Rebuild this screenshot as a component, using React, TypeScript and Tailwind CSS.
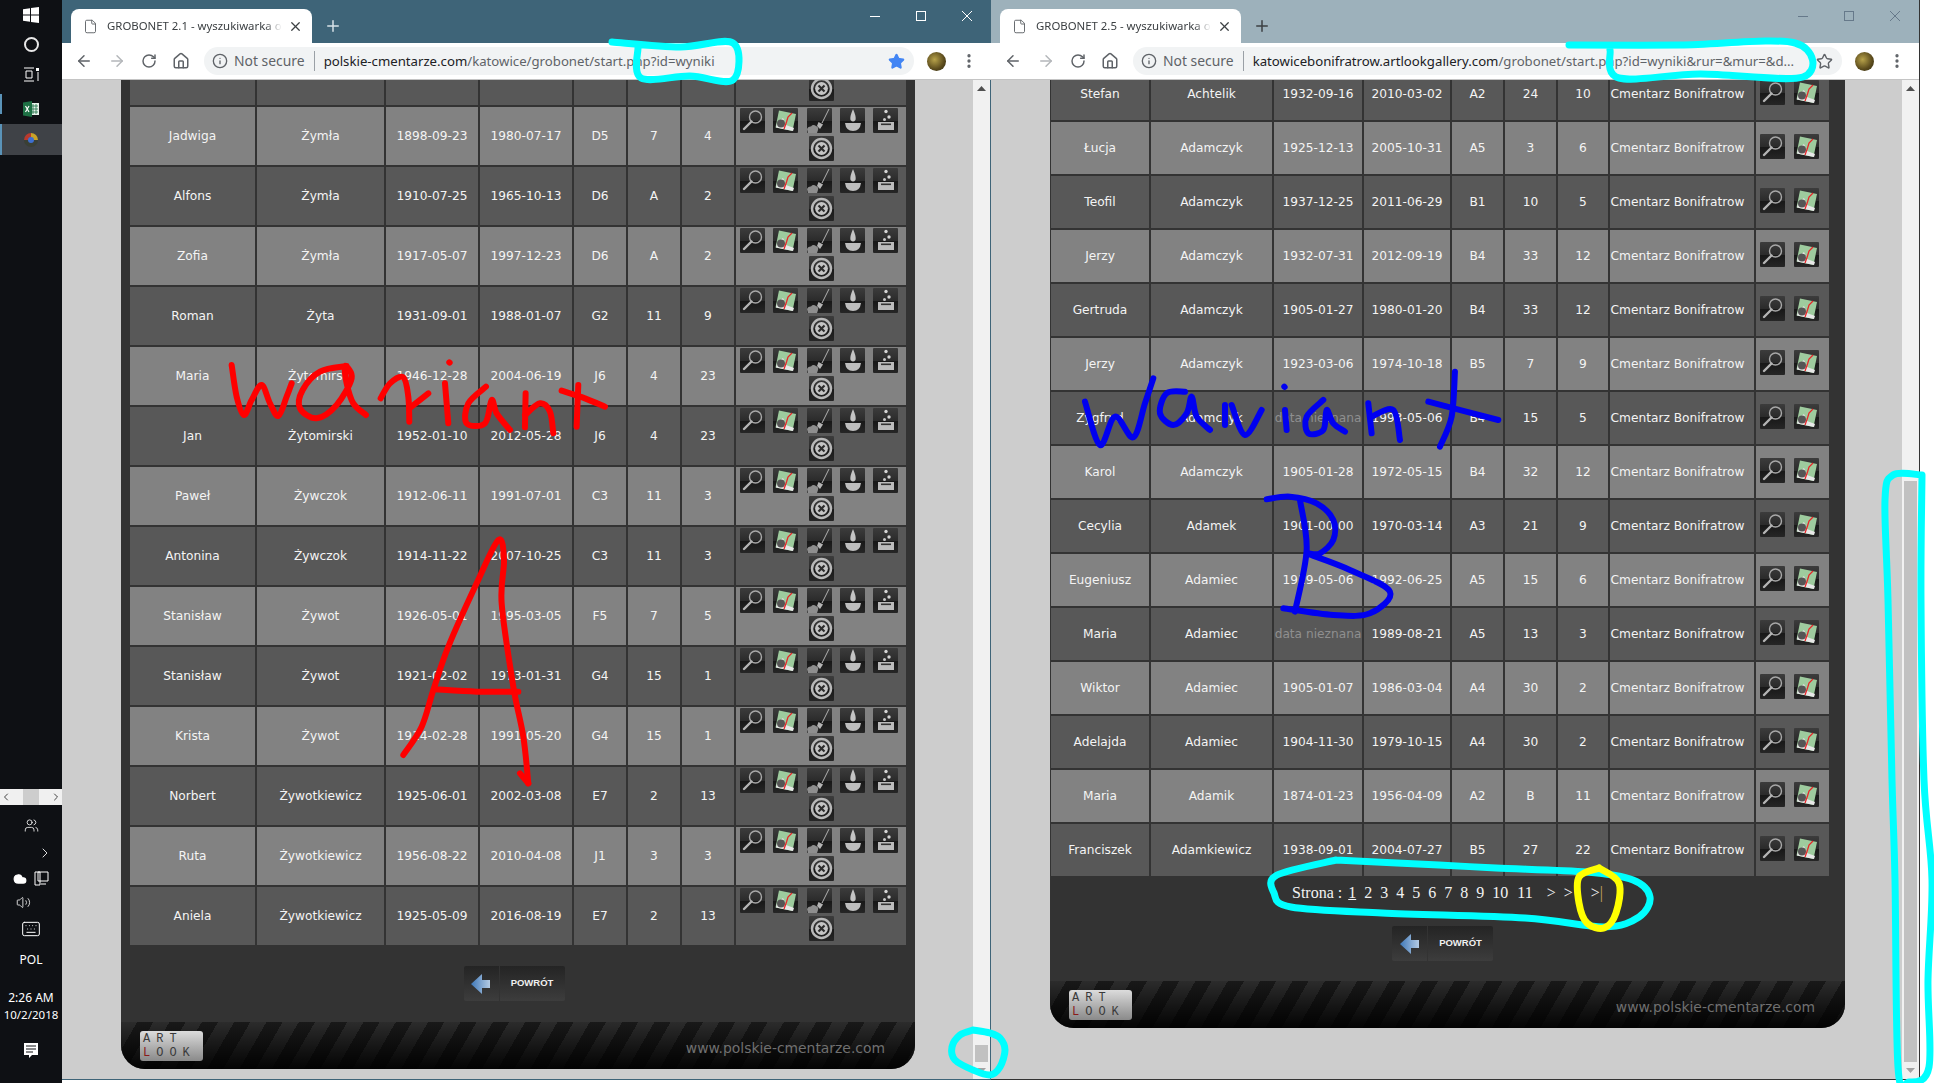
import { ArrowLeft, ArrowRight, ChevronLeft, ChevronRight, Cloud, File, Home, Info, Keyboard, MoreVertical, Plus, RotateCw, Star, Users, Volume2, X } from "lucide-react";

type Row = string[];

const LEFT_ROWS: Row[] = [
  ["Jadwiga", "Żymła", "1898-09-23", "1980-07-17", "D5", "7", "4"],
  ["Alfons", "Żymła", "1910-07-25", "1965-10-13", "D6", "A", "2"],
  ["Zofia", "Żymła", "1917-05-07", "1997-12-23", "D6", "A", "2"],
  ["Roman", "Żyta", "1931-09-01", "1988-01-07", "G2", "11", "9"],
  ["Maria", "Żytomirski", "1946-12-28", "2004-06-19", "J6", "4", "23"],
  ["Jan", "Żytomirski", "1952-01-10", "2012-05-28", "J6", "4", "23"],
  ["Paweł", "Żywczok", "1912-06-11", "1991-07-01", "C3", "11", "3"],
  ["Antonina", "Żywczok", "1914-11-22", "2007-10-25", "C3", "11", "3"],
  ["Stanisław", "Żywot", "1926-05-01", "1995-03-05", "F5", "7", "5"],
  ["Stanisław", "Żywot", "1921-02-02", "1973-01-31", "G4", "15", "1"],
  ["Krista", "Żywot", "1914-02-28", "1991-05-20", "G4", "15", "1"],
  ["Norbert", "Żywotkiewicz", "1925-06-01", "2002-03-08", "E7", "2", "13"],
  ["Ruta", "Żywotkiewicz", "1956-08-22", "2010-04-08", "J1", "3", "3"],
  ["Aniela", "Żywotkiewicz", "1925-05-09", "2016-08-19", "E7", "2", "13"],
];

const RIGHT_ROWS: Row[] = [
  ["Stefan", "Achtelik", "1932-09-16", "2010-03-02", "A2", "24", "10"],
  ["Łucja", "Adamczyk", "1925-12-13", "2005-10-31", "A5", "3", "6"],
  ["Teofil", "Adamczyk", "1937-12-25", "2011-06-29", "B1", "10", "5"],
  ["Jerzy", "Adamczyk", "1932-07-31", "2012-09-19", "B4", "33", "12"],
  ["Gertruda", "Adamczyk", "1905-01-27", "1980-01-20", "B4", "33", "12"],
  ["Jerzy", "Adamczyk", "1923-03-06", "1974-10-18", "B5", "7", "9"],
  ["Zygfryd", "Adamczyk", "data nieznana", "1993-05-06", "B4", "15", "5"],
  ["Karol", "Adamczyk", "1905-01-28", "1972-05-15", "B4", "32", "12"],
  ["Cecylia", "Adamek", "1901-00-00", "1970-03-14", "A3", "21", "9"],
  ["Eugeniusz", "Adamiec", "1919-05-06", "1992-06-25", "A5", "15", "6"],
  ["Maria", "Adamiec", "data nieznana", "1989-08-21", "A5", "13", "3"],
  ["Wiktor", "Adamiec", "1905-01-07", "1986-03-04", "A4", "30", "2"],
  ["Adelajda", "Adamiec", "1904-11-30", "1979-10-15", "A4", "30", "2"],
  ["Maria", "Adamik", "1874-01-23", "1956-04-09", "A2", "B", "11"],
  ["Franciszek", "Adamkiewicz", "1938-09-01", "2004-07-27", "B5", "27", "22"],
];

const PAGES = ["2", "3", "4", "5", "6", "7", "8", "9", "10", "11"];

function IconBox({ children }: { children: React.ReactNode }) {
  return (
    <svg width="25" height="25" viewBox="0 0 25 25" className="shrink-0">
      <defs>
        <linearGradient id="btn" x1="0" y1="0" x2="0" y2="1">
          <stop offset="0" stopColor="#3c3c3c" />
          <stop offset="0.5" stopColor="#2b2b2b" />
          <stop offset="0.52" stopColor="#171717" />
          <stop offset="1" stopColor="#262626" />
        </linearGradient>
      </defs>
      <rect width="25" height="25" rx="1" fill="url(#btn)" />
      {children}
    </svg>
  );
}

const SearchIcon = () => (
  <IconBox>
    <circle cx="15.5" cy="9" r="6" fill="none" stroke="#a8a8a8" strokeWidth="1.4" />
    <path d="M11.5 13.5 L4 21" stroke="#b4b4b4" strokeWidth="2.4" strokeLinecap="round" />
  </IconBox>
);

const MapIcon = () => (
  <IconBox>
    <path d="M6 2.5 L23 6 L19.5 23 L2.5 19.5 Z" fill="#9ecb9e" />
    <path d="M4 15 L10 10 L13 17 L21 20 L20 23 L3 19.5 Z" fill="#e8e8e8" />
    <circle cx="8" cy="15.5" r="4" fill="#555" />
    <path d="M19 5 L15 9 L13.5 14 L11 21" fill="none" stroke="#e8262a" strokeWidth="1.3" />
  </IconBox>
);

const BroomIcon = () => (
  <IconBox>
    <path d="M22 1 L15 15" stroke="#b0b0b0" strokeWidth="1" />
    <path d="M11.5 14 L16 16.5 L13 21 L10 18 Z" fill="#b4b4b4" />
    <path d="M0 21 Q1 18 4 18.5 Q6 16 9 18 Q12 19 11 22 L10 25 L1 25 Z" fill="#8e8e8e" />
  </IconBox>
);

const CandleIcon = () => (
  <IconBox>
    <path d="M13 1 Q16.5 9 15.5 12 Q13 15 10.5 12 Q9.5 9 13 1 Z" fill="#c4c4c4" />
    <path d="M5 15 H21 Q20 23 13 23 Q6 23 5 15 Z" fill="#bdbdbd" />
  </IconBox>
);

const UrnIcon = () => (
  <IconBox>
    <circle cx="13" cy="3.5" r="1.7" fill="#d4d4d4" />
    <circle cx="16" cy="9" r="1.7" fill="#d4d4d4" />
    <circle cx="11.5" cy="11.5" r="1.5" fill="#c8c8c8" />
    <path d="M5 14 H21 V22 H5 Z" fill="#bcbcbc" />
    <rect x="8" y="15.5" width="10" height="1.6" fill="#333" />
  </IconBox>
);

const RemoveIcon = () => (
  <IconBox>
    <circle cx="12.5" cy="12.5" r="9.5" fill="none" stroke="#b8b8b8" strokeWidth="2.4" />
    <circle cx="12.5" cy="12.5" r="6.4" fill="#c4c4c4" />
    <path d="M9.5 9.5 L15.5 15.5 M15.5 9.5 L9.5 15.5" stroke="#2d2d2d" strokeWidth="2.2" />
  </IconBox>
);

function Cell({ value, light, extra = "" }: { value: string; light: boolean; extra?: string }) {
  const dim = value === "data nieznana";
  return (
    <div
      className={`flex items-center justify-center overflow-hidden whitespace-nowrap font-['DejaVu_Sans',sans-serif] text-[12.2px] ${
        light ? "bg-[#828282]" : "bg-[#585858]"
      } ${dim ? "text-[#8f8f8f]" : "text-[#f4f4f4]"} ${extra}`}
    >
      {value}
    </div>
  );
}

function Footer() {
  return (
    <div className="flex h-[47px] items-center justify-between rounded-b-[24px] pr-[30px] pl-[19px] [background:linear-gradient(180deg,rgba(0,0,0,0.05)_0%,rgba(0,0,0,0.55)_55%,rgba(0,0,0,0.92)_100%),repeating-linear-gradient(120deg,#2e2e2e_0px,#2e2e2e_14px,#1a1a1a_14px,#1a1a1a_28px)]">
      <div className="flex h-[30px] w-[63px] flex-col justify-center rounded-[3px] bg-gradient-to-b from-[#dcdcdc] to-[#8a8a8a] pl-[3px] font-['Liberation_Mono',monospace] text-[12px] leading-[14px] text-[#3a3a3a]">
        <span className="tracking-[6px]">ART</span>
        <span className="tracking-[6px]">
          <span className="text-[#8b1a1a]">L</span>OOK
        </span>
      </div>
      <span className="pt-[5px] font-['DejaVu_Sans',sans-serif] text-[13.9px] text-[#707070]">www.polskie-cmentarze.com</span>
    </div>
  );
}

function BackButton({ extra }: { extra: string }) {
  return (
    <div className={`flex h-[35px] justify-center ${extra}`}>
      <div className="flex h-full w-[35px] items-center justify-center rounded-l-[2px] bg-gradient-to-b from-[#242424] to-[#3d3d3d]">
        <svg width="20" height="20" viewBox="0 0 20 20">
          <defs>
            <linearGradient id="arrow" x1="0" y1="0" x2="1" y2="0">
              <stop offset="0" stopColor="#3f78b8" />
              <stop offset="1" stopColor="#b4cbe4" />
            </linearGradient>
          </defs>
          <path d="M0 10 L11 0 V6 H19 V14 H11 V20 Z" fill="url(#arrow)" />
        </svg>
      </div>
      <div className="ml-[1px] flex h-full w-[65px] items-center justify-center rounded-r-[2px] bg-gradient-to-b from-[#242424] to-[#3d3d3d] font-['Liberation_Sans',sans-serif] text-[9.5px] font-bold text-[#f0f0f0]">
        POWRÓT
      </div>
    </div>
  );
}

function Toolbar({ host, path, starred }: { host: string; path: string; starred: boolean }) {
  return (
    <div className="flex h-[37px] items-center border-b border-[#c4c4c4] bg-white pl-[13px]">
      <div className="flex w-[129px] items-center gap-[15px] text-[#5f6368]">
        <ArrowLeft size={18} strokeWidth={2} />
        <ArrowRight size={18} strokeWidth={2} className="text-[#b4b7ba]" />
        <RotateCw size={16} strokeWidth={2.2} />
        <Home size={18} strokeWidth={2} />
      </div>
      <div className="flex h-[28px] flex-1 items-center rounded-full bg-[#f1f3f4] pr-[9px] pl-[8px] font-['Noto_Sans',sans-serif] text-[13.2px]">
        <Info size={16} strokeWidth={2} className="mr-[6px] shrink-0 text-[#5f6368]" />
        <span className="pt-px text-[13.9px] text-[#5f6368]">Not secure</span>
        <span className="mx-[9px] h-[20px] w-px bg-[#9aa0a6]" />
        <span className="flex-1 whitespace-nowrap pt-px">
          <span className="text-[#202124]">{host}</span>
          <span className="text-[#5f6368]">{path}</span>
        </span>
        {starred ? (
          <Star size={17} className="shrink-0 fill-[#4285f4] text-[#4285f4]" />
        ) : (
          <Star size={17} strokeWidth={2} className="shrink-0 text-[#5f6368]" />
        )}
      </div>
      <div className="flex w-[77px] items-center pl-[13px]">
        <span className="h-[19px] w-[19px] rounded-full bg-[radial-gradient(circle_at_40%_40%,#b7a24a,#5a4a1c_60%,#2c2a14)]" />
        <MoreVertical size={18} strokeWidth={2.4} className="ml-[14px] text-[#5f6368]" />
      </div>
    </div>
  );
}

function TitleBar({ title, active }: { title: string; active: boolean }) {
  return (
    <div className={`flex h-[43px] items-end pl-[9px] ${active ? "bg-[#3e6478]" : "bg-[#9db1bb]"}`}>
      <div className="flex h-[34px] w-[241px] items-center rounded-t-[8px] bg-white pr-[9px] pl-[12px]">
        <File size={15} strokeWidth={1.5} className="shrink-0 text-[#5f6368]" />
        <span className="ml-[9px] flex-1 whitespace-nowrap font-['Noto_Sans',sans-serif] text-[11.4px] text-[#3c4043] [mask-image:linear-gradient(90deg,#000_90%,transparent)]">
          {title}
        </span>
        <X size={15} strokeWidth={2} className="ml-[6px] shrink-0 text-[#3c4043]" />
      </div>
      <div className={`flex h-[34px] w-[42px] items-center justify-center ${active ? "text-[#d8e2e8]" : "text-[#3c4043]"}`}>
        <Plus size={18} strokeWidth={2} />
      </div>
      <div className={`ml-auto flex h-full items-start gap-[36px] pt-[7px] pr-[19px] ${active ? "text-white" : "text-[#66798a]"}`}>
        <svg width="10" height="18" viewBox="0 0 10 18"><path d="M0 9.5 H10" stroke="currentColor" strokeWidth="1" /></svg>
        <svg width="10" height="18" viewBox="0 0 10 18"><rect x="0.5" y="4.5" width="9" height="9" fill="none" stroke="currentColor" strokeWidth="1" /></svg>
        <svg width="10" height="18" viewBox="0 0 10 18"><path d="M0 4 L10 14 M10 4 L0 14" stroke="currentColor" strokeWidth="1" /></svg>
      </div>
    </div>
  );
}

function Scrollbar({ thumbTop, thumbHeight }: { thumbTop: string; thumbHeight: string }) {
  return (
    <div className="flex w-[17px] shrink-0 flex-col items-center bg-[#f1f1f1]">
      <div className="flex h-[17px] w-full items-center justify-center text-[#505050]">
        <svg width="9" height="5" viewBox="0 0 9 5"><path d="M4.5 0 L9 5 H0 Z" fill="currentColor" /></svg>
      </div>
      <div className={`w-[13px] bg-[#c1c1c1] ${thumbTop} ${thumbHeight}`} />
      <div className="mt-auto flex h-[17px] w-full items-center justify-center text-[#a3a3a3]">
        <svg width="9" height="5" viewBox="0 0 9 5"><path d="M4.5 5 L9 0 H0 Z" fill="currentColor" /></svg>
      </div>
    </div>
  );
}

function LeftWindow() {
  const cols = "grid grid-cols-[125px_127px_92px_92px_52px_52px_52px_170px] gap-[2px]";
  return (
    <div className="flex h-[1080px] w-[929px] shrink-0 flex-col border-b border-[#3e6478]">
      <TitleBar title="GROBONET 2.1 - wyszukiwarka o" active />
      <Toolbar host="polskie-cmentarze.com" path="/katowice/grobonet/start.php?id=wyniki" starred />
      <div className="flex min-h-0 flex-1 overflow-hidden border-r border-[#3e6478] bg-[#cdcdcd]">
        <div className="min-w-0 flex-1 overflow-hidden">
          <div className="mt-[-33px] ml-[59px] flex h-[1022px] w-[794px] flex-col rounded-b-[24px] bg-[#333] pr-[9px] pl-[9px]">
            <div className={cols}>
              <Cell value="" light={false} />
              <Cell value="" light={false} />
              <Cell value="" light={false} />
              <Cell value="" light={false} />
              <Cell value="" light={false} />
              <Cell value="" light={false} />
              <Cell value="" light={false} />
              <IconsFull light={false} />
              {LEFT_ROWS.map((row, i) => (
                <RowCells key={i} row={row} light={i % 2 === 0} full />
              ))}
            </div>
            <div className="mt-[21px]">
              <BackButton extra="pr-[8px]" />
            </div>
            <div className="mt-auto -mr-[9px] -ml-[9px]">
              <Footer />
            </div>
          </div>
        </div>
        <Scrollbar thumbTop="mt-[948px]" thumbHeight="h-[17px]" />
      </div>
    </div>
  );
}

function IconsFull({ light }: { light: boolean }) {
  return (
    <div className={`flex h-[58px] flex-wrap content-start justify-center gap-x-[8.25px] gap-y-[3px] pt-[1px] pr-[4px] ${light ? "bg-[#828282]" : "bg-[#585858]"}`}>
      <SearchIcon />
      <MapIcon />
      <BroomIcon />
      <CandleIcon />
      <UrnIcon />
      <span className="ml-[4px] flex">
        <RemoveIcon />
      </span>
    </div>
  );
}

function RowCells({ row, light, full }: { row: Row; light: boolean; full?: boolean }) {
  return (
    <>
      {row.map((value, i) => (
        <Cell key={i} value={value} light={light} />
      ))}
      {full ? (
        <IconsFull light={light} />
      ) : (
        <>
          <Cell value="Cmentarz Bonifratrow" light={light} extra="pr-[9px]" />
          <div className={`flex h-[52px] items-start justify-center gap-[9px] pt-[12px] pr-[6px] ${light ? "bg-[#828282]" : "bg-[#585858]"}`}>
            <SearchIcon />
            <MapIcon />
          </div>
        </>
      )}
    </>
  );
}

function RightWindow() {
  return (
    <div className="flex h-[1080px] w-[929px] shrink-0 flex-col border-r border-b border-[#333]">
      <TitleBar title="GROBONET 2.5 - wyszukiwarka o" active={false} />
      <Toolbar host="katowicebonifratrow.artlookgallery.com" path="/grobonet/start.php?id=wyniki&rur=&mur=&d..." starred={false} />
      <div className="flex min-h-0 flex-1 overflow-hidden bg-[#cdcdcd]">
        <div className="min-w-0 flex-1 overflow-hidden">
          <div className="mt-[-12px] ml-[59px] flex h-[960px] w-[795px] flex-col rounded-b-[24px] bg-[#333] pr-[16px] pl-[1px]">
            <div className="grid grid-cols-[98px_121px_88px_86px_51px_51px_50px_144px_73px] gap-[2px]">
              {RIGHT_ROWS.map((row, i) => (
                <RowCells key={i} row={row} light={i % 2 === 1} />
              ))}
            </div>
            <div className="mt-[5px] flex h-[24px] items-center pl-[241px] font-['Liberation_Serif',serif] text-[16px] text-[#f2f2f2]">
              <span className="mr-[6px]">Strona :</span>
              <div className="flex gap-[8px]">
                <span className="underline">1</span>
                {PAGES.map((p) => (
                  <span key={p} className={p === "11" ? "ml-[1px]" : ""}>{p}</span>
                ))}
              </div>
              <span className="ml-[14px]">&gt;</span>
              <span className="ml-[8px]">&gt;</span>
              <span className="ml-[18px]">&gt;<span className="text-[#c9a860]">|</span></span>
            </div>
            <div className="mt-[21px]">
              <BackButton extra="pl-[5px]" />
            </div>
            <div className="mt-auto -mr-[16px] -ml-[1px]">
              <Footer />
            </div>
          </div>
        </div>
        <Scrollbar thumbTop="mt-[384px]" thumbHeight="h-[582px]" />
      </div>
    </div>
  );
}

function Taskbar() {
  return (
    <div className="flex h-[1083px] w-[62px] shrink-0 flex-col items-center bg-[#0e1014] text-white">
      <svg width="16" height="16" viewBox="0 0 16 16" className="mt-[7px]">
        <path d="M0 2.2 L7 1.2 V7.5 H0 Z M8 1 L16 0 V7.5 H8 Z M0 8.5 H7 V14.8 L0 13.8 Z M8 8.5 H16 V16 L8 15 Z" fill="#fff" />
      </svg>
      <span className="mt-[14px] h-[15px] w-[15px] rounded-full border-[2px] border-[#e8e8e8]" />
      <svg width="17" height="15" viewBox="0 0 17 15" className="mt-[15px]">
        <path d="M1 1 H11 M1 14 H11 M3 4 H9 V11 H3 Z M15 5 V14" stroke="#fff" strokeWidth="1" fill="none" />
        <rect x="13" y="1" width="3" height="3" fill="#fff" />
      </svg>
      <div className="relative mt-[11px] flex h-[31px] w-full items-center justify-center">
        <span className="absolute top-[1px] left-0 h-[20px] w-[2px] bg-[#5a93b8]" />
        <svg width="16" height="16" viewBox="0 0 16 16">
          <rect x="6" y="2" width="10" height="12" fill="#e6f2ea" />
          <path d="M10 3 V13 M13 3 V13 M7 5 H15 M7 8 H15 M7 11 H15" stroke="#1d7044" strokeWidth="0.8" />
          <path d="M0 1.5 L9 0 V16 L0 14.5 Z" fill="#1d7044" />
          <path d="M2.5 5 L6 11 M6 5 L2.5 11" stroke="#fff" strokeWidth="1.2" />
        </svg>
      </div>
      <div className="relative flex h-[31px] w-full items-center justify-center bg-[#3f4247]">
        <span className="absolute top-0 left-0 h-full w-[2px] bg-[#5a93b8]" />
        <svg width="14" height="14" viewBox="0 0 14 14">
          <path d="M7 0 A7 7 0 0 1 14 7 H7 Z" fill="#c9a227" />
          <path d="M7 0 A7 7 0 0 0 0 7 H7 Z" fill="#b83a2e" />
          <path d="M0 7 A7 7 0 0 0 14 7 H7 Z" fill="#3a3f35" />
          <circle cx="7" cy="7" r="3" fill="#3d6fd0" />
        </svg>
      </div>
      <div className="mt-[634px] flex h-[16px] w-full items-center justify-between bg-[#f0f0f0] text-[#444]">
        <ChevronLeft size={12} />
        <span className="h-full w-[16px] bg-[#cdcdcd]" />
        <ChevronRight size={12} />
      </div>
      <Users size={15} className="mt-[13px]" strokeWidth={1.3} />
      <ChevronRight size={16} className="mt-[12px] ml-[27px]" strokeWidth={1.3} />
      <div className="mt-[10px] flex items-center gap-[7px]">
        <Cloud size={14} className="fill-white" />
        <svg width="15" height="15" viewBox="0 0 15 15">
          <path d="M4 1 H14 V10 H4 Z M1 1 H6 V14 H1 Z M7 13 H12" stroke="#fff" fill="none" />
        </svg>
      </div>
      <Volume2 size={15} className="mt-[9px] mr-[15px]" strokeWidth={1.3} />
      <Keyboard size={20} className="mt-[9px]" strokeWidth={1.2} />
      <span className="mt-[12px] font-['Noto_Sans',sans-serif] text-[12px]">POL</span>
      <span className="mt-[20px] font-['Noto_Sans',sans-serif] text-[12px] leading-[18px]">2:26 AM</span>
      <span className="font-['Noto_Sans',sans-serif] text-[11.5px] leading-[16px] whitespace-nowrap">10/2/2018</span>
      <svg width="16" height="16" viewBox="0 0 16 16" className="mt-[20px]">
        <path d="M1 0 H15 V12 H9 L6 15 V12 H1 Z" fill="#fff" />
        <path d="M3 3 H13 M3 6 H13 M3 9 H10" stroke="#0e1014" />
      </svg>
    </div>
  );
}

// catmull-rom through the traced points, so the pen strokes stay soft
function spline(pts: number[][]) {
  let d = `M${pts[0][0]} ${pts[0][1]}`;
  for (let i = 0; i < pts.length - 1; i++) {
    const p0 = pts[i - 1] ?? pts[i];
    const p1 = pts[i];
    const p2 = pts[i + 1];
    const p3 = pts[i + 2] ?? p2;
    d += ` C${p1[0] + (p2[0] - p0[0]) / 6} ${p1[1] + (p2[1] - p0[1]) / 6} ${p2[0] - (p3[0] - p1[0]) / 6} ${p2[1] - (p3[1] - p1[1]) / 6} ${p2[0]} ${p2[1]}`;
  }
  return d;
}

function Strokes({ lines, color, width }: { lines: number[][][]; color: string; width: number }) {
  return (
    <g fill="none" stroke={color} strokeWidth={width} strokeLinecap="round" strokeLinejoin="round">
      {lines.map((l, i) => (
        <path key={i} d={spline(l)} />
      ))}
    </g>
  );
}

const RED_WORD = [
  [[335, 75], [350, 170], [372, 225], [395, 180], [425, 135], [450, 190], [475, 228], [500, 170], [515, 130]],
  [[680, 78], [600, 95], [548, 150], [540, 205], [590, 235], [650, 195], [695, 115], [675, 78], [680, 130], [700, 190], [738, 225]],
  [[782, 175], [810, 130], [850, 112], [865, 170], [868, 245]],
  [[868, 205], [925, 160]],
  [[975, 130], [985, 250]],
  [[988, 67], [989, 68]],
  [[1098, 140], [1045, 190], [1040, 250], [1095, 250], [1115, 180], [1130, 220], [1170, 270]],
  [[1217, 160], [1215, 262]],
  [[1215, 225], [1260, 190], [1290, 215], [1300, 280]],
  [[1375, 135], [1370, 260]],
  [[1325, 152], [1395, 175], [1455, 200]],
];

const RED_A = [
  [[70, 705], [125, 620], [160, 510], [205, 380], [290, 190], [355, 60], [372, 120], [365, 250], [400, 500], [430, 650], [445, 790]],
  [[420, 760], [445, 790]],
  [[165, 508], [290, 515], [415, 515]],
];

const BLUE_WORD = [
  [[105, 155], [150, 285], [195, 200], [250, 262], [285, 160], [310, 85]],
  [[405, 125], [350, 130], [330, 190], [370, 225], [410, 190], [425, 140], [440, 200], [480, 240]],
  [[525, 165], [525, 225]],
  [[545, 165], [585, 255], [635, 180]],
  [[703, 110], [704, 111]],
  [[705, 180], [710, 240]],
  [[820, 150], [770, 200], [775, 250], [820, 240], [830, 180], [850, 220], [885, 245]],
  [[955, 160], [965, 250]],
  [[965, 200], [1030, 180], [1050, 270]],
  [[1215, 65], [1205, 200], [1170, 290]],
  [[1135, 155], [1345, 210]],
];

const BLUE_B = [
  [[650, 448], [720, 440], [800, 460], [850, 510], [850, 570], [810, 610], [775, 610]],
  [[750, 450], [770, 600], [735, 785]],
  [[775, 612], [900, 660], [1020, 725], [960, 790], [850, 795], [700, 775]],
];

const CYAN = [
  [[612, 42], [680, 47], [733, 43], [733, 80], [690, 76], [641, 78], [638, 47]],
  [[1569, 45], [1680, 45], [1795, 43], [1803, 77], [1700, 74], [1619, 78], [1610, 50]],
  [[973, 1030], [960, 1035], [952, 1047], [955, 1060], [973, 1070], [990, 1075], [1000, 1067], [1005, 1050], [1000, 1038], [990, 1033], [973, 1030]],
  [[1922, 475], [1893, 475], [1885, 500], [1888, 600], [1892, 780], [1895, 880], [1898, 1067], [1909, 1082], [1929, 1067], [1928, 980], [1932, 880], [1924, 780], [1921, 600], [1922, 475]],
  [[1336, 860], [1277, 875], [1274, 893], [1291, 907], [1382, 913], [1525, 918], [1604, 927], [1639, 917], [1650, 897], [1633, 880], [1587, 872], [1496, 868], [1439, 865], [1336, 860]],
];

const YELLOW = [[[1599, 868], [1579, 877], [1579, 903], [1587, 923], [1604, 928], [1616, 913], [1619, 883], [1599, 868]]];

export default function App() {
  return (
    <div className="relative flex h-[1083px] w-[1934px] overflow-hidden bg-white">
      <Taskbar />
      <LeftWindow />
      <RightWindow />

      {/* pen marks on top of everything */}
      <svg className="pointer-events-none absolute inset-0" width="1934" height="1083">
        <g transform="translate(120 340) scale(0.3333)">
          <Strokes lines={RED_WORD} color="#ff0000" width={18} />
        </g>
        <g transform="translate(380 520) scale(0.3333)">
          <Strokes lines={RED_A} color="#ff0000" width={18} />
        </g>
        <g transform="translate(1050 350) scale(0.3333)">
          <Strokes lines={BLUE_WORD} color="#0000f0" width={18} />
          <Strokes lines={BLUE_B} color="#0000f0" width={18} />
        </g>
        <Strokes lines={CYAN} color="#00ffff" width={7} />
        <Strokes lines={YELLOW} color="#ffff00" width={7} />
      </svg>
    </div>
  );
}
